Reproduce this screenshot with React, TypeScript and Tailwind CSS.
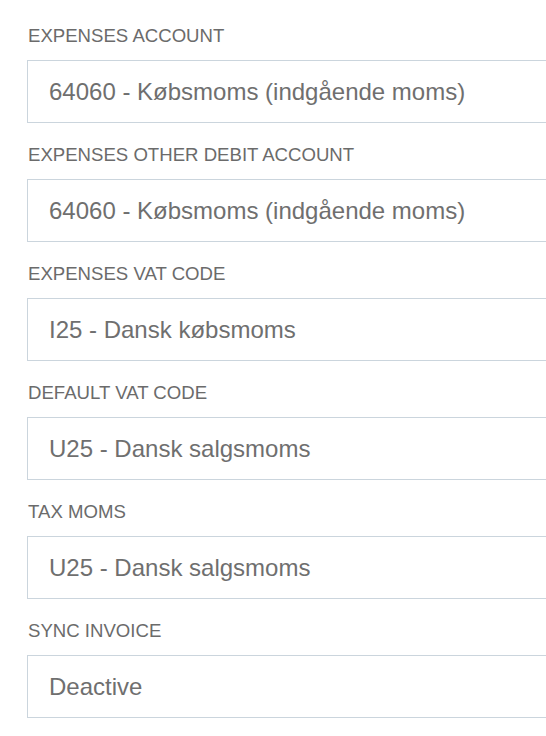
import React from "react";

const fields = [
  { label: "EXPENSES ACCOUNT", value: "64060 - Købsmoms (indgående moms)" },
  { label: "EXPENSES OTHER DEBIT ACCOUNT", value: "64060 - Købsmoms (indgående moms)" },
  { label: "EXPENSES VAT CODE", value: "I25 - Dansk købsmoms" },
  { label: "DEFAULT VAT CODE", value: "U25 - Dansk salgsmoms" },
  { label: "TAX MOMS", value: "U25 - Dansk salgsmoms" },
  { label: "SYNC INVOICE", value: "Deactive" },
];

export default function App() {
  return (
    <div
      className="w-[546px] h-[736px] overflow-hidden bg-white pl-[27px] pt-[26px]"
      style={{ fontFamily: '"Liberation Sans", Arial, Helvetica, sans-serif' }}
    >
      <div className="flex flex-col gap-[22px]">
        {fields.map((f, i) => (
          <div key={i} className="flex flex-col">
            <div className="ml-[1px] h-[20px] text-[18.6px] leading-[20px] text-[#6b6b6b] whitespace-nowrap">
              {f.label}
            </div>
            <div className="mt-[14px] flex h-[63px] w-[540px] shrink-0 items-center border border-[#cbd5dd] bg-white pl-[21px] text-[24px] text-[#6f6f6f] whitespace-nowrap">
              {f.value}
            </div>
          </div>
        ))}
      </div>
    </div>
  );
}
